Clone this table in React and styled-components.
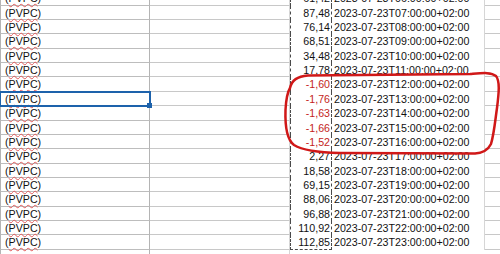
import styled, { createGlobalStyle } from 'styled-components';

const GlobalStyle = createGlobalStyle`
  html, body {
    margin: 0;
    padding: 0;
    background: #ffffff;
    overflow: hidden;
  }
  body {
    font-family: "Liberation Sans", Arial, sans-serif;
  }
`;

const Sheet = styled.div`
  position: relative;
  width: 500px;
  height: 254px;
  overflow: hidden;
  background: #ffffff;
  font-size: 10.67px;
  color: #111;
`;

const Rows = styled.div`
  margin-top: -8.7px;
`;

const Row = styled.div`
  display: grid;
  grid-template-columns: 150px 140px 42px 153px 15px;
  height: 14.37px;
`;

const Cell = styled.div`
  box-sizing: border-box;
  height: 14.37px;
  line-height: 14px;
  white-space: nowrap;
  overflow: visible;
  border-bottom: 1px solid #c8c8c8;
`;

const NameCell = styled(Cell)`
  position: relative;
  padding-left: 4px;
  border-left: 1px solid #b4b4b4;
  border-right: 1px solid #b4b4b4;
  border-bottom-color: #bdbdbd;
  ${(p) =>
    p.$selected &&
    `
    outline: 2px solid #1d62ab;
    outline-offset: -1px;
    z-index: 1;
    &::after {
      content: '';
      position: absolute;
      right: -3px;
      bottom: -3px;
      width: 5px;
      height: 5px;
      background: #1d62ab;
    }
  `}
`;

const Misspelt = styled.span`
  text-decoration: underline wavy #e25a5a;
  text-decoration-thickness: 1px;
  text-underline-offset: 1px;
`;

const EmptyCell = styled(Cell)`
  border-right: 1px solid #d6d6d6;
`;

const ValueCell = styled(Cell)`
  text-align: right;
  padding-right: 1px;
  border-bottom: none;
  border-left: 1px dashed #4a4a4a;
  border-right: 1px dashed #4a4a4a;
  color: ${(p) => (p.$negative ? '#c41e1c' : '#111')};
  ${(p) => p.$last && `border-bottom: 1px dashed #4a4a4a;`}
`;

const DateCell = styled(Cell)`
  padding-left: 2px;
  border-bottom: none;
  border-right: 1px solid #d6d6d6;
`;

const Annotation = styled.svg`
  position: absolute;
  left: 0;
  top: 0;
  pointer-events: none;
`;

const data = [
  ['06', '61,42'],
  ['07', '87,48'],
  ['08', '76,14'],
  ['09', '68,51'],
  ['10', '34,48'],
  ['11', '17,78'],
  ['12', '-1,60'],
  ['13', '-1,76'],
  ['14', '-1,63'],
  ['15', '-1,66'],
  ['16', '-1,52'],
  ['17', '2,27'],
  ['18', '18,58'],
  ['19', '69,15'],
  ['20', '88,06'],
  ['21', '96,88'],
  ['22', '110,92'],
  ['23', '112,85'],
];

export default function App() {
  return (
    <>
      <GlobalStyle />
      <Sheet>
        <Rows>
          {data.map(([hour, value], i) => (
            <Row key={hour}>
              <NameCell $selected={hour === '13'}>
                (<Misspelt>PVPC</Misspelt>)
              </NameCell>
              <EmptyCell />
              <ValueCell $negative={value.startsWith('-')} $last={i === data.length - 1}>
                {value}
              </ValueCell>
              <DateCell>2023-07-23T{hour}:00:00+02:00</DateCell>
              <Cell />
            </Row>
          ))}
          <Row>
            <NameCell />
            <EmptyCell />
            <Cell style={{ borderBottom: 'none' }} />
            <Cell />
            <Cell />
          </Row>
        </Rows>
        <Annotation width="500" height="254" viewBox="0 0 500 254">
          <path
            d="M 290 88 C 292 80, 297 76.5, 308 75.5 L 470 74 C 483 73, 491 72, 496 76 C 500 81, 499 92, 497 108 C 495 122, 494 134, 491 144 C 488 150, 483 153, 475 153.5 L 340 153 C 318 152.5, 302 150, 294 145 C 286 139, 285 125, 285.5 110 C 286 100, 287 93, 290 88 Z"
            fill="none"
            stroke="#d01818"
            strokeWidth="2.5"
            strokeLinejoin="round"
            strokeLinecap="round"
          />
        </Annotation>
      </Sheet>
    </>
  );
}
